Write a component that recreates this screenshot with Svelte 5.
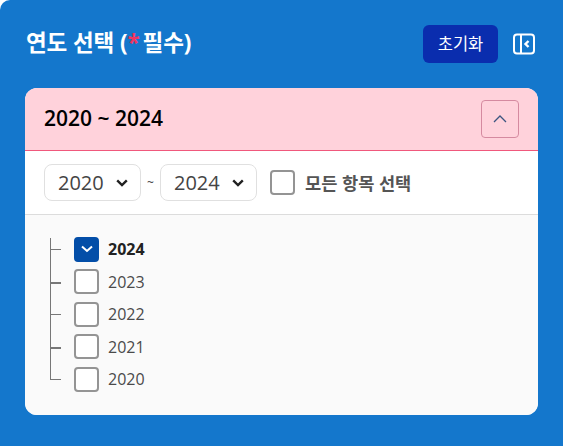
<script>
  let years = [
    { year: 2024, checked: true },
    { year: 2023, checked: false },
    { year: 2022, checked: false },
    { year: 2021, checked: false },
    { year: 2020, checked: false }
  ];
</script>

<div class="panel">
  <header class="top">
    <h2>연도 선택 (<span class="req">*</span>필수)</h2>
    <div class="actions">
      <button class="reset">초기화</button>
      <button class="collapse" aria-label="접기">
        <svg width="24" height="24" viewBox="0 0 24 24" fill="none" stroke="#fff" stroke-width="2">
          <rect x="2" y="2.5" width="20" height="19" rx="3" />
          <path d="M9 2.5v19" />
          <path d="M16.5 9l-3 3 3 3" stroke-width="2.4" />
        </svg>
      </button>
    </div>
  </header>

  <section class="card">
    <div class="card-head">
      <strong>2020 ~ 2024</strong>
      <button class="toggle" aria-label="닫기">
        <svg width="14" height="8" viewBox="0 0 14 8" fill="none" stroke="#3d5580" stroke-width="1.3">
          <path d="M1 7l6-6 6 6" />
        </svg>
      </button>
    </div>

    <div class="toolbar">
      <div class="select">
        <span>2020</span>
        <svg width="12" height="8" viewBox="0 0 12 8" fill="none" stroke="#222" stroke-width="2.4">
          <path d="M1.2 1.4L6 6l4.8-4.6" />
        </svg>
      </div>
      <span class="tilde">~</span>
      <div class="select">
        <span>2024</span>
        <svg width="12" height="8" viewBox="0 0 12 8" fill="none" stroke="#222" stroke-width="2.4">
          <path d="M1.2 1.4L6 6l4.8-4.6" />
        </svg>
      </div>
      <label class="all">
        <span class="box"></span>
        <span>모든 항목 선택</span>
      </label>
    </div>

    <ul class="tree">
      {#each years as item, i}
        <li class:first={i === 0} class:last={i === years.length - 1}>
          <span class="branch" class:thick={i % 2 === 1}></span>
          <span class="box" class:on={item.checked}>
            {#if item.checked}
              <svg width="14" height="10" viewBox="0 0 14 10" fill="none" stroke="#fff" stroke-width="2">
                <path d="M2 2.4L7 7l5-4.6" />
              </svg>
            {/if}
          </span>
          <span class="label" class:sel={item.checked}>{item.year}</span>
        </li>
      {/each}
    </ul>
  </section>
</div>

<style>
  :global(body) {
    background: #fff;
    font-family: "Open Sans", "Noto Sans CJK KR", sans-serif;
  }
  .panel {
    height: 446px;
    box-sizing: border-box;
    padding: 25px 25px 31px;
    background: #1477cc;
    border-radius: 10px 0 0 0;
    display: flex;
    flex-direction: column;
  }
  .top {
    height: 38px;
    margin-bottom: 25px;
    display: flex;
    align-items: center;
    justify-content: space-between;
    padding-left: 1px;
  }
  h2 {
    margin: -2px 0 0;
    color: #fff;
    font-size: 22.5px;
    line-height: 30px;
    font-weight: 700;
    letter-spacing: -0.1px;
  }
  .req {
    color: #f0355f;
    margin-right: 3px;
  }
  .actions {
    display: flex;
    align-items: center;
    gap: 14px;
    margin-right: 2px;
  }
  button {
    font-family: inherit;
    padding: 0;
    cursor: pointer;
  }
  .reset {
    width: 75px;
    height: 38px;
    border: 0;
    border-radius: 6px;
    background: #0a2dae;
    color: #fff;
    font-size: 16.5px;
    line-height: 20px;
  }
  .collapse {
    width: 24px;
    height: 24px;
    border: 0;
    background: none;
    display: flex;
  }
  .card {
    flex: 1;
    background: #fff;
    border-radius: 12px;
    overflow: hidden;
    display: flex;
    flex-direction: column;
  }
  .card-head {
    height: 62px;
    flex: none;
    padding: 0 19px;
    background: #ffd2db;
    border-bottom: 1px solid #f0587c;
    display: flex;
    align-items: center;
    justify-content: space-between;
  }
  .card-head strong {
    color: #000;
    font-size: 21px;
    line-height: 28px;
    font-weight: 600;
    margin-top: -3px;
  }
  .toggle {
    width: 38px;
    height: 38px;
    box-sizing: border-box;
    background: transparent;
    border: 1px solid #d58aa0;
    border-radius: 4px;
    display: flex;
    align-items: center;
    justify-content: center;
  }
  .toolbar {
    height: 63px;
    flex: none;
    padding: 0 19px;
    border-bottom: 1px solid #dcdcdc;
    display: flex;
    align-items: center;
  }
  .select {
    width: 97px;
    height: 37px;
    box-sizing: border-box;
    padding: 0 12px 0 13px;
    border: 1px solid #e0e0e0;
    border-radius: 8px;
    display: flex;
    align-items: center;
    justify-content: space-between;
    color: #444;
    font-size: 20px;
    font-weight: 400;
  }
  .tilde {
    width: 19px;
    text-align: center;
    font-size: 12px;
    color: #444;
  }
  .all {
    display: flex;
    align-items: center;
    gap: 10px;
    margin-left: 13px;
    color: #555;
    font-size: 17.6px;
    line-height: 24px;
    font-weight: 700;
  }
  .box {
    width: 25px;
    height: 25px;
    flex: none;
    box-sizing: border-box;
    background: #fff;
    border: 2px solid #949494;
    border-radius: 4px;
    display: flex;
    align-items: center;
    justify-content: center;
  }
  .box.on {
    background: #034ea8;
    border-color: #034ea8;
  }
  .tree {
    flex: 1;
    margin: 0;
    padding: 18px 0 0 25px;
    background: #fafafa;
    list-style: none;
  }
  li {
    height: 32.5px;
    position: relative;
    display: flex;
    align-items: center;
  }
  .branch {
    width: 24px;
    flex: none;
    height: 32.5px;
    position: relative;
  }
  .branch::before {
    content: "";
    position: absolute;
    left: 0;
    top: 0;
    bottom: 0;
    border-left: 1px solid #777;
  }
  .first .branch::before {
    top: 5px;
  }
  .last .branch::before {
    bottom: 50%;
  }
  .branch::after {
    content: "";
    position: absolute;
    left: 0;
    top: 50%;
    width: 11px;
    border-top: 1px solid #777;
  }
  .branch.thick::after {
    border-top-width: 2px;
  }
  .label {
    margin-left: 9px;
    color: #4a4a4a;
    font-size: 16px;
    font-weight: 500;
  }
  .label.sel {
    color: #222;
    font-weight: 700;
  }
</style>
